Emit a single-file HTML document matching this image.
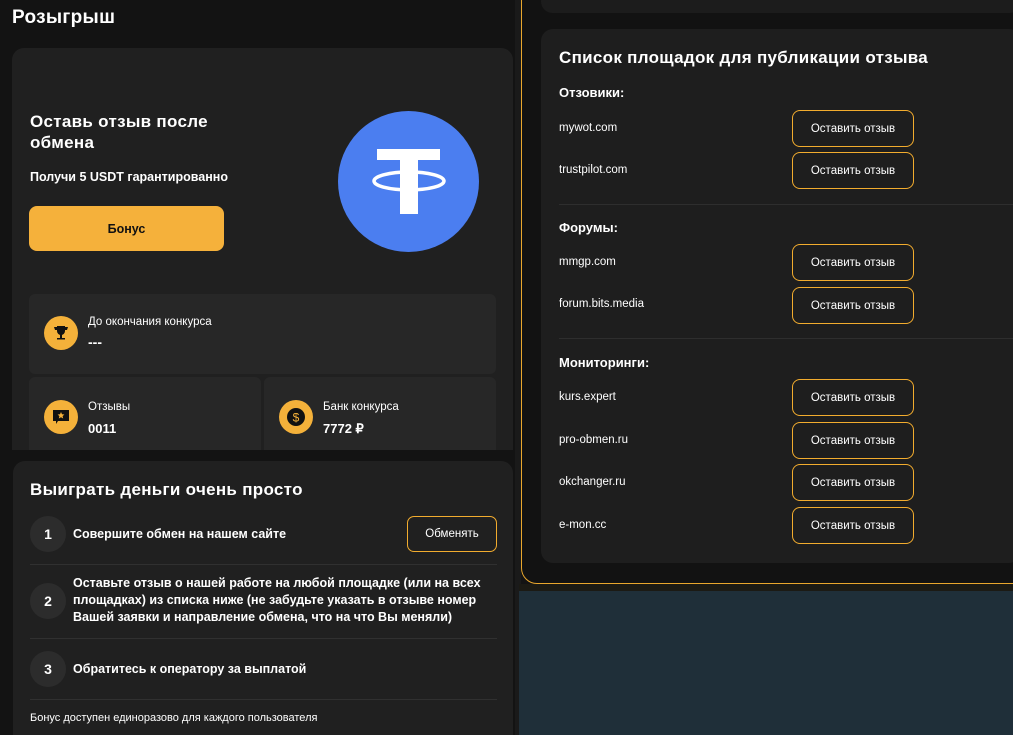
<!DOCTYPE html>
<html style="overflow:hidden;height:735px"><head><meta charset="utf-8"><style>
*{margin:0;padding:0;box-sizing:border-box}
body{width:1013px;height:735px;overflow:hidden;background:#131313;font-family:"Liberation Sans",sans-serif;color:#fff;position:relative}
.a{position:absolute}
.b{font-weight:bold}
.btn{position:absolute;border:1px solid #f2ac2e;border-radius:8px;font-size:11.5px;display:flex;align-items:center;justify-content:center;color:#fff}
.site{position:absolute;left:559px;font-size:11.5px}
.hd{position:absolute;left:559px;font-size:13px;font-weight:bold}
.dv{position:absolute;left:559px;right:0;height:1px;background:#2e2e2e}
.ic{position:absolute;width:34px;height:34px;border-radius:50%;background:#f4b13a}
.stat{position:absolute;background:#272727;border-radius:6px}
.num{position:absolute;width:36px;height:36px;border-radius:50%;background:#2c2c2c;font-weight:bold;font-size:14px;display:flex;align-items:center;justify-content:center}
.st{position:absolute;left:73px;font-size:12.5px;font-weight:bold;line-height:17px}
.ldv{position:absolute;left:30px;width:467px;height:1px;background:#303030}
</style></head><body>
<div class="a" style="left:515px;top:0;width:6px;height:735px;background:#1a1a1a"></div>
<div class="a b" style="left:12px;top:7px;font-size:19px;letter-spacing:0.3px">Розыгрыш</div>

<div class="a" style="left:12px;top:48px;width:501px;height:402px;background:#202020;border-radius:12px 12px 0 0"></div>
<div class="a b" style="left:30px;top:111px;font-size:17px;line-height:21px;letter-spacing:0.3px">Оставь отзыв после<br>обмена</div>
<div class="a b" style="left:30px;top:170px;font-size:12.5px">Получи 5 USDT гарантированно</div>
<div class="a b" style="left:29px;top:206px;width:195px;height:45px;background:#f5b13b;border-radius:8px;color:#111;font-size:12.5px;display:flex;align-items:center;justify-content:center">Бонус</div>
<div class="a" style="left:338px;top:111px;width:141px;height:141px;border-radius:50%;background:#4b7ef0"></div>
<svg class="a" style="left:338px;top:111px" width="141" height="141"><rect x="39" y="38" width="63" height="11" fill="#fff"/><rect x="62" y="38" width="18" height="65" fill="#fff"/><ellipse cx="71" cy="70" rx="35" ry="9" fill="none" stroke="#fff" stroke-width="3.5"/></svg>

<div class="stat" style="left:29px;top:294px;width:467px;height:80px"></div>
<div class="ic" style="left:44px;top:316px"></div>
<svg class="a" style="left:53px;top:325px" width="16" height="16"><path d="M4 1h8v5a4 4 0 0 1-8 0z M1 2h3v3H2z M12 2h3l-1 3h-2z" fill="#111"/><rect x="7" y="9" width="2" height="4" fill="#111"/><rect x="4" y="13" width="8" height="1.5" fill="#111"/></svg>
<div class="a" style="left:88px;top:316px;font-size:11.5px">До окончания конкурса</div>
<div class="a b" style="left:88px;top:334px;font-size:14px">---</div>

<div class="stat" style="left:29px;top:377px;width:232px;height:73px;border-radius:6px 6px 0 0"></div>
<div class="ic" style="left:44px;top:400px"></div>
<svg class="a" style="left:52px;top:409px" width="18" height="17"><path d="M1 1h16v11H6l-2 3v-3H1z" fill="#111"/><path d="M9 3l1 2.3 2.4.2-1.8 1.6.6 2.4L9 8.2 6.8 9.5l.6-2.4-1.8-1.6L8 5.3z" fill="#f4b13a"/></svg>
<div class="a" style="left:88px;top:401px;font-size:11.5px">Отзывы</div>
<div class="a b" style="left:88px;top:421px;font-size:13px">0011</div>

<div class="stat" style="left:264px;top:377px;width:232px;height:73px;border-radius:6px 6px 0 0"></div>
<div class="ic" style="left:279px;top:400px"></div>
<svg class="a" style="left:285px;top:406px" width="22" height="22"><circle cx="11" cy="11" r="9" fill="#111"/><text x="11" y="15.5" text-anchor="middle" font-size="12" font-family="Liberation Sans" fill="#f4b13a">$</text></svg>
<div class="a" style="left:323px;top:401px;font-size:11.5px">Банк конкурса</div>
<div class="a b" style="left:323px;top:421px;font-size:13px">7772 ₽</div>

<div class="a" style="left:13px;top:461px;width:500px;height:274px;background:#202020;border-radius:12px 12px 0 0"></div>
<div class="a b" style="left:30px;top:480px;font-size:17px;letter-spacing:0.3px">Выиграть деньги очень просто</div>
<div class="num" style="left:30px;top:516px">1</div>
<div class="st" style="left:73px;top:526px">Совершите обмен на нашем сайте</div>
<div class="btn" style="left:407px;top:516px;width:90px;height:36px;border-radius:7px">Обменять</div>
<div class="ldv" style="top:564px"></div>
<div class="num" style="left:30px;top:583px">2</div>
<div class="st" style="top:575px;width:430px">Оставьте отзыв о нашей работе на любой площадке (или на всех площадках) из списка ниже (не забудьте указать в отзыве номер Вашей заявки и направление обмена, что на что Вы меняли)</div>
<div class="ldv" style="top:638px"></div>
<div class="num" style="left:30px;top:651px">3</div>
<div class="st" style="top:661px">Обратитесь к оператору за выплатой</div>
<div class="ldv" style="top:699px"></div>
<div class="a" style="left:30px;top:712px;font-size:11px">Бонус доступен единоразово для каждого пользователя</div>

<div class="a" style="left:521px;top:-20px;width:520px;height:604px;border:1px solid #e9a72d;border-radius:0 0 0 16px;background:#121212"></div>
<div class="a" style="left:519px;top:584px;width:494px;height:8px;background:#1b1a14"></div>
<div class="a" style="left:519px;top:591px;width:494px;height:144px;background:#1f2f39"></div>
<div class="a" style="left:541px;top:-10px;width:480px;height:23px;background:#1c1c1c;border-radius:12px"></div>
<div class="a" style="left:541px;top:29px;width:480px;height:534px;background:#1e1e1e;border-radius:12px"></div>
<div class="a b" style="left:559px;top:48px;font-size:17px;letter-spacing:0.3px">Список площадок для публикации отзыва</div>
<div class="hd" style="top:85px">Отзовики:</div>
<div class="site" style="top:122px">mywot.com</div><div class="btn" style="left:792px;top:110px;width:122px;height:37px">Оставить отзыв</div>
<div class="site" style="top:164px">trustpilot.com</div><div class="btn" style="left:792px;top:152px;width:122px;height:37px">Оставить отзыв</div>
<div class="dv" style="top:204px"></div>
<div class="hd" style="top:220px">Форумы:</div>
<div class="site" style="top:256px">mmgp.com</div><div class="btn" style="left:792px;top:244px;width:122px;height:37px">Оставить отзыв</div>
<div class="site" style="top:298px">forum.bits.media</div><div class="btn" style="left:792px;top:287px;width:122px;height:37px">Оставить отзыв</div>
<div class="dv" style="top:338px"></div>
<div class="hd" style="top:355px">Мониторинги:</div>
<div class="site" style="top:391px">kurs.expert</div><div class="btn" style="left:792px;top:379px;width:122px;height:37px">Оставить отзыв</div>
<div class="site" style="top:434px">pro-obmen.ru</div><div class="btn" style="left:792px;top:422px;width:122px;height:37px">Оставить отзыв</div>
<div class="site" style="top:476px">okchanger.ru</div><div class="btn" style="left:792px;top:464px;width:122px;height:37px">Оставить отзыв</div>
<div class="site" style="top:519px">e-mon.cc</div><div class="btn" style="left:792px;top:507px;width:122px;height:37px">Оставить отзыв</div>
</body></html>
